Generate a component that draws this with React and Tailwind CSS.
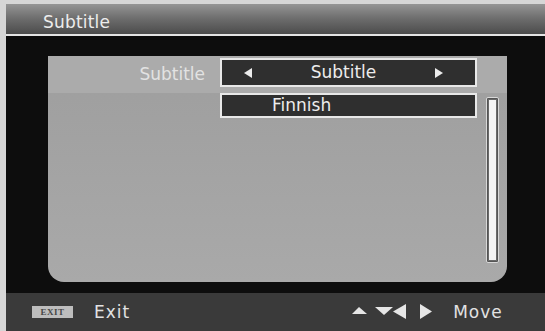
import React from "react";

const font = { fontFamily: '"DejaVu Sans", "Liberation Sans", sans-serif' };

function NavArrows() {
  return (
    <svg width="82" height="16" viewBox="0 0 82 16" className="block">
      <polygon points="0,10 7,3 15,10" fill="#e6e6e6" />
      <polygon points="23,3 41,3 32,11" fill="#e6e6e6" />
      <polygon points="54,0 54,15 41,7.5" fill="#e6e6e6" />
      <polygon points="68,0 68,15 80,7.5" fill="#e6e6e6" />
    </svg>
  );
}

export default function App() {
  return (
    <div
      style={font}
      className="w-[545px] h-[331px] overflow-hidden bg-[#d6d6d6] pt-[4px] pl-[6px] flex flex-col"
    >
      {/* title bar */}
      <div className="h-[32px] shrink-0 flex items-center pl-[37px] pt-[6px] bg-gradient-to-b from-[#959595] via-[#6c6c6c] to-[#4c4c4c] border-b-2 border-[#e4e4e4] box-border">
        <span className="text-[17px] text-[#ececec] tracking-[0.2px] leading-none">
          Subtitle
        </span>
      </div>

      {/* body */}
      <div className="flex-1 bg-[#0d0d0d] pt-[20px] pl-[42px] pb-[11px]">
        <div className="w-[459px] h-[226px] rounded-b-[16px] overflow-hidden flex flex-col bg-gradient-to-b from-[#9e9e9e] to-[#a9a9a9]">
          <div className="h-[37px] shrink-0 bg-[#ababab] flex">
            <div className="w-[172px] pr-[15px] pt-[6px] text-right text-[17px] text-[#e2e2e2] leading-[24px]">
              Subtitle
            </div>
            <div className="mt-[2px] w-[257px] h-[29px] border-2 border-[#e8e8e8] bg-[#2f2f2f] flex items-center justify-between pl-[22px] pr-[32px] text-[#ececec]">
              <svg width="8" height="10" viewBox="0 0 8 10">
                <polygon points="8,0 8,10 0,5" fill="#ececec" />
              </svg>
              <span className="text-[17px] leading-none">Subtitle</span>
              <svg width="8" height="10" viewBox="0 0 8 10">
                <polygon points="0,0 0,10 8,5" fill="#ececec" />
              </svg>
            </div>
          </div>
          <div className="flex-1 flex">
            <div className="w-[172px] shrink-0" />
            <div className="w-[257px] h-[25px] border-2 border-[#e8e8e8] bg-[#2f2f2f] pl-[50px] flex items-center text-[17px] text-[#ececec] leading-none">
              Finnish
            </div>
            <div className="ml-[9px] mt-[4px] w-[13px] h-[166px] rounded-[2px] border border-[#d8d8d8] bg-[#555] p-[1px]">
              <div className="w-full h-full rounded-[1px] border border-[#6a6a6a] bg-[#f4f4f4]" />
            </div>
          </div>
        </div>
      </div>

      {/* footer */}
      <div className="h-[38px] shrink-0 bg-[#3a3a3a] flex items-center pl-[26px] text-[#e2e2e2]">
        <div className="w-[41px] h-[12px] bg-[#bdbdbd] flex items-center justify-center">
          <span
            className="text-[9px] font-black tracking-[0.5px] text-[#474747] leading-none"
            style={{ fontFamily: '"Liberation Serif", serif' }}
          >
            EXIT
          </span>
        </div>
        <span className="ml-[21px] text-[17px] tracking-[1px] leading-none">Exit</span>
        <div className="ml-[222px]">
          <NavArrows />
        </div>
        <span className="ml-[19px] text-[17px] tracking-[1px] leading-none">Move</span>
      </div>
    </div>
  );
}
